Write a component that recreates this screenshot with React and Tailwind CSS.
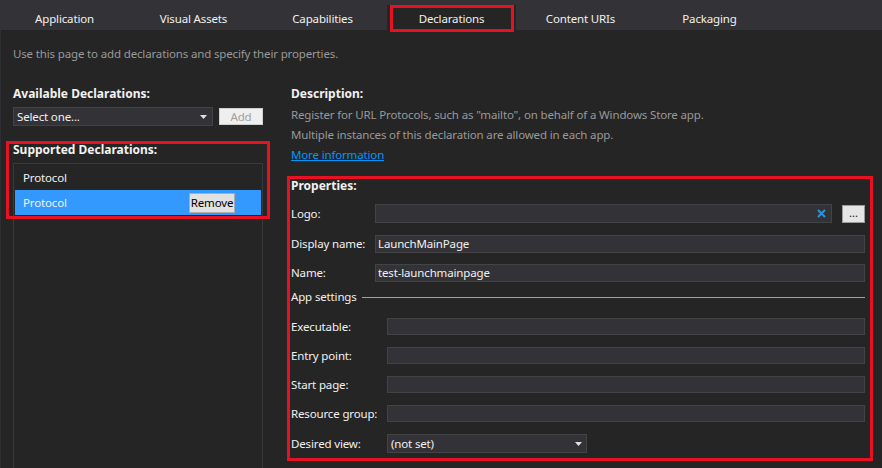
import React from "react";

function Arrow() {
  return (
    <svg width="7" height="4" viewBox="0 0 7 4" className="shrink-0">
      <path d="M0 0 L7 0 L3.5 4 Z" fill="#e0e0e0" />
    </svg>
  );
}

function Field({ label, labelW, value, h = "h-[18px]", mt }) {
  return (
    <div className={`flex items-center ${mt}`}>
      <div className={`${labelW} shrink-0 leading-[16px]`}>{label}</div>
      <div className={`flex-1 ${h} bg-[#333337] border border-[#434346] flex items-center pl-[2px] leading-[16px]`}>
        {value}
      </div>
    </div>
  );
}

export default function App() {
  const tabs = ["Application", "Visual Assets", "Capabilities", "Declarations", "Content URIs", "Packaging"];
  return (
    <div className="w-[882px] h-[468px] overflow-hidden bg-[#252526] text-[11.5px] tracking-[-0.15px] text-[#f1f1f1] font-['Noto_Sans',sans-serif] flex flex-col">
      <div className="h-[30px] bg-[#333337] flex shrink-0">
        {tabs.map((t) =>
          t === "Declarations" ? (
            <div key={t} className="w-[129px] mt-[5px] h-[25px] bg-[#252526] relative text-center leading-[16px] pt-[6px]">
              {t}
              <div className="absolute left-[3px] right-[2px] top-0 h-[27px] border-[3px] border-[#e81123] pointer-events-none" />
            </div>
          ) : (
            <div key={t} className="w-[129px] text-center leading-[16px] pt-[11px]">
              {t}
            </div>
          )
        )}
      </div>

      <div className="flex-1 min-h-0 border-l border-[#2f2f33] pl-[12px] flex flex-col">
        <div className="mt-[16px] leading-[16px] text-[#999999]">Use this page to add declarations and specify their properties.</div>

        <div className="flex mt-[24px] flex-1 min-h-0">
          {/* Left column */}
          <div className="relative w-[250px] flex flex-col shrink-0">
            <div className="font-bold text-[12px] tracking-normal leading-[16px]">Available Declarations:</div>
            <div className="mt-[5px] flex items-center">
              <div className="w-[200px] h-[19px] bg-[#333337] border border-[#434346] flex items-center justify-between pl-[3px] pr-[5px] leading-[16px]">
                <span>Select one...</span>
                <Arrow />
              </div>
              <div className="ml-[6px] w-[44px] h-[17px] bg-[#efefef] border border-[#cfcfcf] text-[#a0a0a0] text-center leading-[15px]">Add</div>
            </div>
            <div className="mt-[16px] font-bold text-[12px] tracking-normal leading-[16px]">Supported Declarations:</div>
            <div className="mt-[5px] flex-1 border border-b-0 border-[#3a3a3e] p-px">
              <div className="h-[25px] flex items-center pl-[8px]">Protocol</div>
              <div className="h-[25px] bg-[#3399ff] flex items-center justify-between pl-[8px] pr-[26px]">
                <span>Protocol</span>
                <div className="w-[46px] h-[20px] bg-[#e1e1e1] border border-[#adadad] text-black text-center leading-[18px]">Remove</div>
              </div>
            </div>
            <div className="absolute left-[-7px] top-[55px] w-[264px] h-[78px] border-[3px] border-[#e81123] pointer-events-none" />
          </div>

          {/* Right column */}
          <div className="ml-[24px] w-[586px] flex flex-col shrink-0">
            <div className="pl-[4px] font-bold text-[12px] tracking-normal leading-[16px]">Description:</div>
            <div className="pl-[4px] mt-[3px] leading-[20px] text-[#999999]">
              <div>Register for URL Protocols, such as "mailto", on behalf of a Windows Store app.</div>
              <div>Multiple instances of this declaration are allowed in each app.</div>
              <div className="text-[#0097fb] underline">More information</div>
            </div>

            <div className="mt-[11px] h-[285px] border-[3px] border-[#e81123] pl-[1px] pr-[5px] flex flex-col">
              <div className="font-bold text-[12px] tracking-normal leading-[14px]">Properties:</div>

              <div className="mt-[11px] flex items-center">
                <div className="w-[84px] shrink-0 leading-[16px]">Logo:</div>
                <div className="flex-1 h-[19px] bg-[#333337] border border-[#434346] flex items-center justify-end pr-[5px]">
                  <svg width="9" height="9" viewBox="0 0 9 9">
                    <path d="M1 1 L8 8 M8 1 L1 8" stroke="#1c97ea" strokeWidth="2" />
                  </svg>
                </div>
                <div className="ml-[10px] w-[23px] h-[18px] bg-[#e5e5e5] border border-[#9a9a9a] text-[#222] text-center leading-[14px]">...</div>
              </div>

              <Field label="Display name:" labelW="w-[84px]" value="LaunchMainPage" mt="mt-[12px]" />
              <Field label="Name:" labelW="w-[84px]" value="test-launchmainpage" mt="mt-[11px]" />

              <div className="mt-[7px] flex items-center h-[16px]">
                <span className="leading-[16px]">App settings</span>
                <div className="flex-1 h-px bg-[#a0a0a0] ml-[5px]" />
              </div>

              <Field label="Executable:" labelW="w-[96px]" value="" h="h-[17px]" mt="mt-[13px]" />
              <Field label="Entry point:" labelW="w-[96px]" value="" h="h-[17px]" mt="mt-[12px]" />
              <Field label="Start page:" labelW="w-[96px]" value="" h="h-[17px]" mt="mt-[12px]" />
              <Field label="Resource group:" labelW="w-[96px]" value="" h="h-[17px]" mt="mt-[12px]" />

              <div className="mt-[12px] flex items-center">
                <div className="w-[96px] shrink-0 leading-[16px]">Desired view:</div>
                <div className="w-[200px] h-[19px] bg-[#333337] border border-[#434346] flex items-center justify-between pl-[3px] pr-[4px] leading-[16px]">
                  <span>(not set)</span>
                  <Arrow />
                </div>
              </div>
            </div>
          </div>
        </div>
      </div>
    </div>
  );
}
